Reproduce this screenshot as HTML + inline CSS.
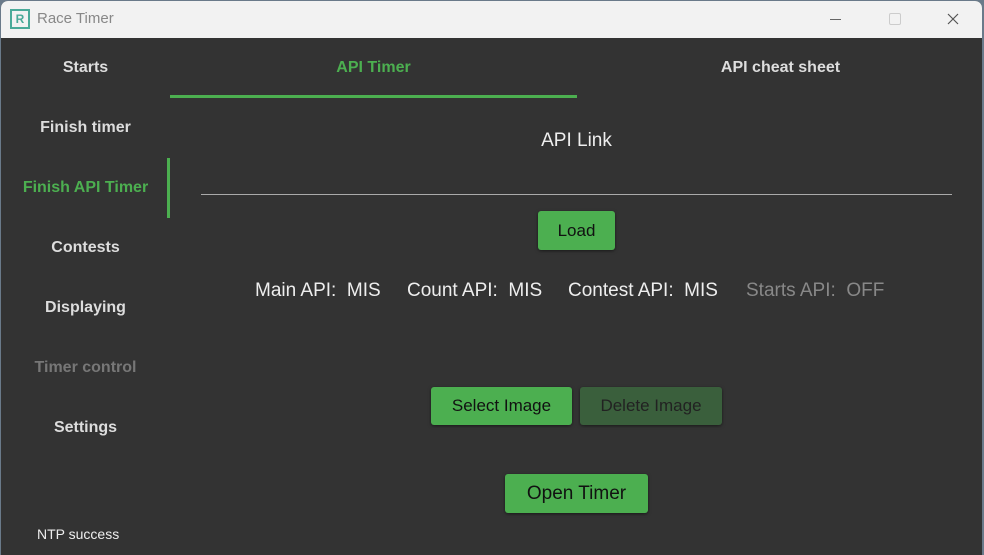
<!DOCTYPE html>
<html><head><style>
body{margin:0;width:984px;height:555px;background:#6a7a8a;overflow:hidden;font-family:"Liberation Sans",Arial,sans-serif;position:relative}
.win{position:absolute;left:1px;top:1px;width:981px;height:554px;background:#333;border-radius:7px 7px 0 0;overflow:hidden}
.tb{position:absolute;left:0;top:0;width:100%;height:37px;background:#f2f2f2}
.t{position:absolute;white-space:nowrap}
.nav{position:absolute;left:0;width:169px;text-align:center;font-size:16px;font-weight:bold;color:#ddd}
.btn{position:absolute;background:#4caf50;border-radius:3px;color:#111;font-size:17px;text-align:center;box-shadow:0 1px 3px rgba(0,0,0,.5)}
.s{position:absolute;top:279px;font-size:19px;color:#eee;white-space:nowrap}
</style></head><body>
<div class="win">
<div class="tb">
<div class="t" style="left:9px;top:8px;width:20px;height:20px;border:2px solid #4aaa99;box-sizing:border-box;font-size:12px;color:#4aaa99;text-align:center;line-height:16px;font-weight:bold">R</div>
<div class="t" style="left:36px;top:9px;font-size:15px;color:#888">Race Timer</div>
<div class="t" style="left:829px;top:18px;width:11px;height:1px;background:#666"></div>
<div class="t" style="left:888px;top:12px;width:10px;height:10px;border:1px solid #ccc;border-radius:2px"></div>
<svg class="t" style="left:946px;top:12px" width="12" height="12"><path d="M1 1L11 11M11 1L1 11" stroke="#555" stroke-width="1.2"/></svg>
</div>
<div class="nav" style="top:58px">Starts</div>
<div class="nav" style="top:118px">Finish timer</div>
<div class="nav" style="top:178px;color:#4caf50">Finish API Timer</div>
<div class="t" style="left:166px;top:157px;width:3px;height:60px;background:#4caf50"></div>
<div class="nav" style="top:238px">Contests</div>
<div class="nav" style="top:298px">Displaying</div>
<div class="nav" style="top:358px;color:#777">Timer control</div>
<div class="nav" style="top:418px">Settings</div>
<div class="t" style="left:36px;top:525px;font-size:14px;color:#eee">NTP success</div>
<div class="t" style="left:169px;top:58px;width:407px;text-align:center;font-size:16px;font-weight:bold;color:#4caf50">API Timer</div>
<div class="t" style="left:169px;top:94px;width:407px;height:3px;background:#4caf50"></div>
<div class="t" style="left:576px;top:58px;width:407px;text-align:center;font-size:16px;font-weight:bold;color:#ddd">API cheat sheet</div>
<div class="t" style="left:200px;top:129px;width:751px;text-align:center;font-size:19px;color:#eee">API Link</div>
<div class="t" style="left:200px;top:193px;width:751px;height:1px;background:#aaa"></div>
<div class="btn" style="left:537px;top:210px;width:77px;height:39px;line-height:39px">Load</div>
<div class="s" style="left:254px">Main API:&nbsp; MIS</div>
<div class="s" style="left:406px">Count API:&nbsp; MIS</div>
<div class="s" style="left:567px">Contest API:&nbsp; MIS</div>
<div class="s" style="left:745px;color:#888">Starts API:&nbsp; OFF</div>
<div class="btn" style="left:430px;top:386px;width:141px;height:38px;line-height:38px">Select Image</div>
<div class="btn" style="left:579px;top:386px;width:142px;height:38px;line-height:38px;background:#3a5f3c;color:#222">Delete Image</div>
<div class="btn" style="left:504px;top:473px;width:143px;height:39px;line-height:39px;font-size:19px">Open Timer</div>
</div>
</body></html>
